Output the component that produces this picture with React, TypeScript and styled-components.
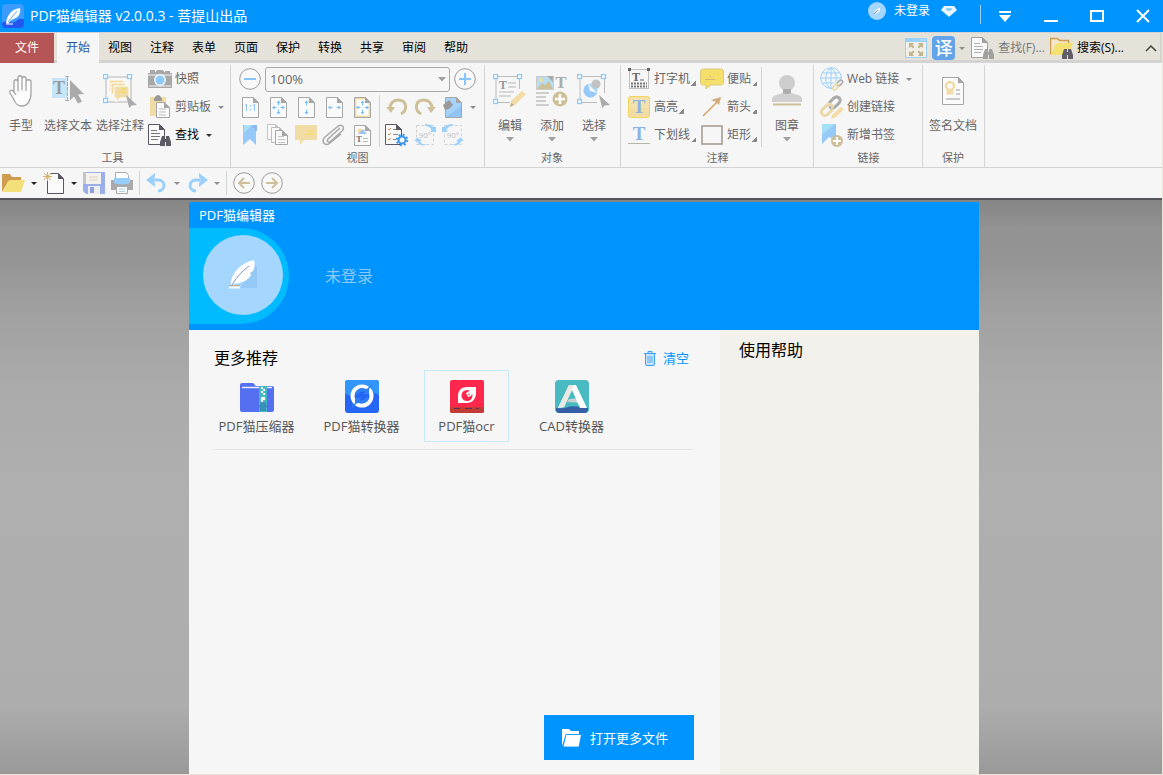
import React from 'react';
import styled, { createGlobalStyle, css } from 'styled-components';

const GlobalStyle = createGlobalStyle`
  * { box-sizing: border-box; }
  html, body { margin: 0; padding: 0; }
  body {
    font-family: 'Open Sans', 'Noto Sans CJK SC', sans-serif;
    font-size: 12px;
    line-height: 16px;
    color: #666;
    background: #f6f6f6;
  }
  button, select {
    font: inherit;
    color: inherit;
    background: none;
    border: 0;
    padding: 0;
    margin: 0;
    white-space: nowrap;
  }
  svg { display: block; flex: none; }
`;

const blue = '#0094ff';
const sky = '#9bd0fa';
const tan = '#cdbf98';
const sand = '#f1dca6';
const steel = '#aaa';

/* ---------- page frame ---------- */

const Page = styled.div`
  display: flex;
  flex-direction: column;
  min-height: 100vh;
`;

const TitleBar = styled.header`
  display: flex;
  height: 32px;
  padding-left: 2px;
  background: ${blue};
  color: #fff;
`;

const AppTitle = styled.h1`
  display: flex;
  align-items: center;
  gap: 6px;
  margin: 0 auto 0 0;
  font-size: 14px;
  line-height: 20px;
  font-weight: 400;
`;

const Account = styled.div`
  display: flex;
  align-items: center;
  gap: 11px;
  height: 22px;
  margin-right: 23px;
`;

const AccountButton = styled.button`
  display: flex;
  align-items: center;
  gap: 8px;
`;

const TitleRule = styled.span`
  width: 1px;
  height: 19px;
  margin: 5px 4px 0 0;
  background: #9bd3ff;
`;

const WindowButtons = styled.div`
  display: flex;
  gap: 6px;
`;

const WindowButton = styled.button`
  display: grid;
  place-items: center;
  width: 40px;
`;

const Frame = styled.div`
  display: flex;
  flex-direction: column;
  flex: 1;
  border-right: 1px solid #ebe6dc;
  border-bottom: 1px solid #e6e3d8;
`;

/* ---------- tabs ---------- */

const TabBar = styled.nav`
  display: flex;
  height: 31px;
  border: solid #d3d3d3;
  border-width: 1px 2px 3px 0;
  background: #e5e2da;
`;

const FileButton = styled.button`
  width: 54px;
  height: 30px;
  margin-right: 3px;
  background: #b55555;
  color: #fff;
`;

const Tab = styled.button<{ $active?: boolean }>`
  width: 42px;
  height: 30px;
  color: #000;
  ${(p) => p.$active && css`
    background: #f6f6f6;
    color: #2b579a;
  `}
`;

const TabTools = styled.div`
  display: flex;
  align-items: center;
  gap: 5px;
  height: 30px;
  margin-left: auto;
  padding-right: 3px;
`;

const TabTool = styled.button<{ $strong?: boolean }>`
  display: flex;
  align-items: center;
  gap: 3px;
  color: ${(p) => (p.$strong ? '#000' : '#777')};
`;

const Collapse = styled.button`
  margin-left: 16px;
`;

/* ---------- ribbon ---------- */

const Ribbon = styled.div`
  display: flex;
  height: 105px;
  padding-top: 2px;
  border-bottom: 1px solid #d3d3d3;
  background: #f6f6f6;
`;

const Group = styled.section<{ $pad?: number }>`
  display: flex;
  flex-direction: column;
  padding: 0 5px 0 ${(p) => p.$pad ?? 4}px;
  border-right: 1px solid #d3d3d3;
`;

const GroupBody = styled.div<{ $w?: number }>`
  display: flex;
  width: ${(p) => (p.$w ? `${p.$w}px` : 'auto')};
  height: 84px;
`;

const GroupLabel = styled.h2`
  margin: 0;
  text-align: center;
  font-size: 11px;
  line-height: 17px;
  font-weight: 400;
`;

const BigButton = styled.button<{ $w: number }>`
  display: flex;
  flex-direction: column;
  align-items: center;
  width: ${(p) => p.$w}px;
  padding-top: 7px;
`;

const BigIcon = styled.span`
  display: grid;
  place-items: center;
  height: 38px;
  margin-bottom: 8px;
`;

const BigArrow = styled.span`
  margin-top: 3px;
`;

const Stack = styled.div<{ $ml?: number }>`
  display: flex;
  flex-direction: column;
  margin-left: ${(p) => p.$ml ?? 0}px;
`;

const RowButton = styled.button<{ $strong?: boolean }>`
  display: flex;
  align-items: center;
  gap: 3px;
  height: 28px;
  color: ${(p) => (p.$strong ? '#000' : '#666')};
`;

const IconSlot = styled.span`
  display: grid;
  place-items: center;
  width: 24px;
`;

const RowArrow = styled.span`
  margin-left: 3px;
`;

const CornerMark = styled.span`
  align-self: flex-end;
  width: 5px;
  height: 5px;
  margin: 0 0 7px -2px;
  background: linear-gradient(135deg, transparent 50%, #888 50%);
`;

const ViewBody = styled.div`
  width: 243px;
  height: 84px;
`;

const ZoomRow = styled.div`
  display: flex;
  align-items: center;
  height: 28px;
`;

const IconButton = styled.button`
  display: grid;
  place-items: center;
  width: 28px;
  height: 28px;
`;

const SelectWrap = styled.span`
  position: relative;
  width: 185px;
  margin: 0 1px;
`;

const ZoomSelect = styled.select`
  display: block;
  appearance: none;
  width: 100%;
  height: 25px;
  padding: 0 4px;
  border: 1px solid #a9a9a9;
  border-radius: 3px;
  font-size: 13px;
`;

const SelectArrow = styled.span`
  position: absolute;
  top: 10px;
  right: 4px;
  pointer-events: none;
`;

const IconRows = styled.div`
  display: flex;
  height: 56px;
`;

const IconGrid = styled.div<{ $cols: string }>`
  display: grid;
  grid-template-columns: ${(p) => p.$cols};
  grid-auto-rows: 28px;
`;

const Divider = styled.span<{ $h: number; $mx?: number }>`
  align-self: center;
  width: 1px;
  height: ${(p) => p.$h}px;
  margin: 0 ${(p) => p.$mx ?? 3}px;
  background: #d3d3d3;
`;

/* ---------- quick access ---------- */

const QuickBar = styled.div`
  display: flex;
  align-items: center;
  height: 30px;
  background: #f6f6f6;
`;

const ArrowButton = styled.button`
  display: grid;
  place-items: center;
  width: 12px;
  height: 28px;
`;

/* ---------- workspace ---------- */

const Workspace = styled.main`
  display: flex;
  justify-content: center;
  flex: 1;
  padding: 2px 0 0 6px;
  border-top: 2px solid #57545b;
  background: linear-gradient(#858585, #939393 5%, #949494 10%, #a1a1a1 20%, #ababab 33%, #afafaf 50%, #adadad 88%, #999 100%);
`;

const Panel = styled.div`
  display: flex;
  flex-direction: column;
  width: 790px;
  background: #f6f6f6;
`;

const PanelHead = styled.div`
  height: 128px;
  background: ${blue};
  color: #fff;
`;

const PanelTitle = styled.div`
  padding-left: 10px;
  font-size: 13px;
  line-height: 26px;
`;

const Profile = styled.div`
  display: flex;
  align-items: center;
  gap: 36px;
  color: #8fc8f7;
  font-size: 16px;
`;

const AvatarBand = styled.div`
  width: 100px;
  height: 96px;
  padding: 7px 0 0 14px;
  border-radius: 0 48px 48px 0;
  background: #00bcff;
`;

const Avatar = styled.div`
  display: grid;
  place-items: center;
  width: 80px;
  height: 80px;
  border-radius: 50%;
  background: #a5d6fd;
`;

const PanelBody = styled.div`
  display: flex;
  flex: 1;
`;

const Recommend = styled.section`
  display: flex;
  flex-direction: column;
  width: 531px;
  padding: 16px 26px 14px 25px;
`;

const Help = styled.aside`
  flex: 1;
  padding: 8px 19px;
  background: #f2f1ec;
`;

const SectionTitle = styled.h2`
  margin: 0;
  font-size: 16px;
  line-height: 24px;
  font-weight: 400;
  color: #000;
`;

const SectionHead = styled.div`
  display: flex;
  justify-content: space-between;
  padding-right: 5px;
`;

const ClearButton = styled.button`
  display: flex;
  align-items: center;
  gap: 7px;
  font-size: 13px;
  color: ${blue};
`;

const AppList = styled.div`
  display: flex;
  gap: 20px;
  padding-bottom: 7px;
  border-bottom: 1px solid #e6e3d8;
`;

const AppTile = styled.a<{ $active?: boolean }>`
  display: flex;
  flex-direction: column;
  align-items: center;
  gap: 3px;
  width: 85px;
  height: 72px;
  padding-top: 9px;
  border: 1px solid ${(p) => (p.$active ? '#c9e8f7' : 'transparent')};
  color: #555;
  font-size: 13px;
  line-height: 18px;
  white-space: nowrap;
  text-decoration: none;
`;

const OpenButton = styled.button`
  display: flex;
  align-items: center;
  gap: 8px;
  width: 150px;
  height: 45px;
  margin: auto 0 0 auto;
  padding-left: 18px;
  background: ${blue};
  color: #fff;
  font-size: 13px;
`;

/* ---------- drawings ---------- */

type SvgProps = { w: number; h: number; children: React.ReactNode };
const Svg = ({ w, h, children }: SvgProps) => (
  <svg width={w} height={h} viewBox={`0 0 ${w} ${h}`} fill="none" aria-hidden="true">{children}</svg>
);

const Caret = ({ color = '#8c8c8c', wide }: { color?: string; wide?: boolean }) => (
  <Svg w={8} h={5}><path d={wide ? 'M0 0h8L4 4.500z' : 'M1 1h6L4 4z'} fill={wide ? '#a0a0a0' : color} /></Svg>
);

const Handle = ({ x, y }: { x: number; y: number }) => (
  <rect x={x - 0.5} y={y - 0.5} width="4" height="4" fill="#fff" stroke="#8cc9f8" strokeWidth="1.300" />
);

const Feather = () => (
  <Svg w={30} h={30}>
    <path d="M12 28L27 4l2 3v21z" fill="#8fc4f3" opacity=".75" />
    <path d="M3 24C3 14 12 3 26 0c1 4 1 8-1 11l-3 2 1 2c-3 5-7 7-12 8l-5 1-2 3z" fill="#fff" />
    <path d="M3 27C7 19 13 12 21 6" stroke="#7f93cf" />
    <path d="M1 26.500h11v2H1z" fill="#fff" />
    <path d="M1 25.500h11" stroke="#c7a98d" />
  </Svg>
);

const LogoIcon = () => (
  <Svg w={22} h={24}>
    <rect width="22" height="24" rx="4" fill="#3c9bff" />
    <path d="M0 19c6-4 9 2 14-2s6-1 8-2v5q0 4-4 4H4q-4 0-4-4z" fill="#2456f0" />
    <path d="M4 19C5 12 9 5 18 4c1 5-1 10-9 12l-3 4z" fill="#fff" />
    <path d="M6 18L15 7" stroke="#74a8e8" />
    <path d="M4 20h7" stroke="#fff" />
  </Svg>
);

const BadgeIcon = () => (
  <Svg w={18} h={18}>
    <circle cx="9" cy="9" r="9" fill="#a5d6fd" />
    <path d="M6 12c0-3 2-5 6-6 0 3-1 5-4 5l-1 2z" fill="#fff" />
    <path d="M6 12l4-4" stroke="#5f86b8" />
  </Svg>
);

const DiamondIcon = () => (
  <Svg w={16} h={11}>
    <path d="M3 0h10l3 4-8 7-8-7z" fill="#e8f6ff" />
    <path d="M5 3h6M6 4h4" stroke="#5ab4f5" />
  </Svg>
);

const HandIcon = () => (
  <Svg w={26} h={34}>
    <path d="M6 19V8c0-3 4-3 4 0v9M10 16V4c0-3 4-3 4 0v12M14 16V5c0-3 4-3 4 0v12M18 17V8c0-3 5-3 5 0v11c0 8-4 13-9 13-5 0-7-3-9-8l-3-5c-1-3 2-4 4-1l2 3" stroke="#a4a4a4" strokeWidth="1.3" fill="#fdfdfd" />
  </Svg>
);

const Pointer = ({ x, y, s = 1 }: { x: number; y: number; s?: number }) => (
  <path transform={`translate(${x} ${y}) scale(${s})`} d="M0 0l10 9-5 .5L3 12z" fill={steel} />
);

const LetterT = ({ x, y, s = 12, c = '#999' }: { x: number; y: number; s?: number; c?: string }) => (
  <text x={x} y={y} fontFamily="Liberation Serif, serif" fontWeight="700" fontSize={s} fill={c} textAnchor="middle">T</text>
);

const TextSelectIcon = () => (
  <Svg w={34} h={32}>
    <rect x="1" y="3" width="15" height="20" fill="#c5e6f8" />
    <LetterT x={8} y={19} s={18} />
    <path d="M14 1.500h5M14 25.500h5M16.500 2v23" stroke={steel} strokeDasharray="4 1" />
    <path d="M19 5l14 14-6 .5 4 7-4 2-4-7-4 4z" fill={steel} />
  </Svg>
);

const NoteSelectIcon = () => (
  <Svg w={34} h={34}>
    <path d="M4 3h24M4 28h24M3 5v22M28 5v22" stroke="#cbcbcb" strokeWidth="1.500" />
    <path d="M6 6h15v11H8l-2 3z" fill={sand} stroke="#fff" />
    <path d="M8 9h15v11H10l-2 3z" fill={sand} stroke="#fff" />
    <path d="M11 12h15v12h-9l-4 4v-4h-2z" fill={sand} stroke="#fff" />
    <path d="M19 15h4M16 18h7" stroke="#f3d873" strokeWidth="2" />
    <Handle x={1} y={1} /><Handle x={25} y={1} /><Handle x={1} y={25} />
    <Pointer x={23} y={21} s={1.1} />
  </Svg>
);

const CameraIcon = () => (
  <Svg w={24} h={18}>
    <path d="M2 0h5v2h1l1-2h6l1 2h1V1h5v2h2v15H0V3h2z" fill="#a8a8a8" />
    <path d="M0 5h24M1 16h22" stroke="#cfcfcf" strokeWidth="2" />
    <circle cx="12" cy="10" r="6" fill="#f6f6f6" /><circle cx="12" cy="10" r="4.500" fill="#8fcbfa" />
  </Svg>
);

type SheetProps = { x?: number; y?: number; w?: number; h?: number; c?: string; fill?: string };
const Sheet = ({ x = 0, y = 0, w = 17, h = 20, c = '#a6a6a6', fill = '#fafafa' }: SheetProps) => (
  <g transform={`translate(${x} ${y})`}>
    <path d={`M.5 .5H${w - 5.5}L${w - 0.5} 5.500V${h - 0.5}H.5z`} stroke={c} fill={fill} />
    <path d={`M${w - 6} 0V6H${w}z`} fill={c} />
  </g>
);

const PasteIcon = () => (
  <Svg w={22} h={24}>
    <path d="M1 2h16v19H1z" fill={sand} /><path d="M5 4l1-2q3-4 6 0l1 2v2H5z" fill="#999" />
    <Sheet x={7} y={7} w={14} h={16} /><path d="M10 14h7M10 17h7M10 20h7" stroke="#bbb" />
  </Svg>
);

const Binoculars = ({ x, y, c }: { x: number; y: number; c: string }) => (
  <g transform={`translate(${x} ${y})`} fill={c}>
    <path d="M2 0h3v10H0V6zM9 0H6v10h5V6z" /><path d="M4 3h3v3H4z" />
  </g>
);

const FindIcon = ({ faded }: { faded?: boolean }) => (
  <Svg w={24} h={22}>
    <Sheet w={17} h={21} c={faded ? '#a0a0a0' : '#5c5664'} />
    <path d="M3 6.500h6M3 9.500h9M3 12.500h9M3 15.500h7" stroke={faded ? '#b0b0b0' : '#777'} />
    <Binoculars x={12} y={12} c={faded ? '#a0a0a0' : '#5d5b64'} />
  </Svg>
);

const RoundIcon = ({ children }: { children: React.ReactNode }) => (
  <Svg w={22} h={22}><circle cx="11" cy="11" r="10.300" stroke="#9c9c9c" fill="#f9f9f9" />{children}</Svg>
);

const ArrowsIcon = ({ mode }: { mode: 'one' | 'all' | 'v' | 'h' | 'frame' }) => (
  <Svg w={17} h={21}>
    <Sheet w={17} h={21} fill={mode === 'frame' ? sand : '#fafafa'} />
    {mode === 'frame' && <path d="M2.500 2.500H11V6h3.500v12.500h-12z" fill="#fff" />}
    {mode === 'one' && <path d="M4.500 7v7M8.500 8v1.500M8.500 12v1.500M12.500 7v7M3 8.500l1.500-1M11 8.500l1.500-1" stroke="#8cc6f8" />}
    {(mode === 'v' || mode === 'all' || mode === 'frame') && <path d="M8.500 3.500l2 2.500H9v2.500H8V6H6.500zM8.500 17.500l-2-2.500H8v-2.500h1V15h1.500z" fill="#76bdf7" />}
    {(mode === 'h' || mode === 'all' || mode === 'frame') && <path d="M2 10.500L4.500 8.500V10h2v1h-2v1.500zM15 10.500l-2.500-2V10h-2v1h2v1.500z" fill="#76bdf7" />}
  </Svg>
);

const BookmarkIcon = () => (
  <Svg w={16} h={20}><path d="M1 0h13v20l-6-6-7 6z" fill="#95c9f7" /><path d="M2 0h8L2 8z" fill="#a8e0f5" /><path d="M10 0h5v6h-2V3h-3z" fill="#8fb5f0" /></Svg>
);

const PagesIcon = () => (
  <Svg w={22} h={22}><Sheet w={14} h={16} c="#c4c4c4" /><Sheet x={4} y={3} w={14} h={16} c="#bcbcbc" /><Sheet x={8} y={6} w={13} h={15} /><path d="M11 12.500h6M11 15.500h7M11 18.500h7" stroke="#c4c4c4" /></Svg>
);

const CommentIcon = () => (
  <Svg w={22} h={21}><path d="M0 0h22v15H9l-4 5v-5H0z" fill={sand} /><path d="M13 6h6M11 9h8" stroke="#f3da7c" strokeWidth="2" /></Svg>
);

const ClipIcon = () => (
  <Svg w={24} h={22}><path d="M18 4L6 15c-2 3 1 4 3 2L20 7c4-4-1-8-5-4L3 13c-5 5 1 10 5 6l11-9" stroke="#a8a8a8" strokeWidth="1.500" /></Svg>
);

const PageMediaIcon = () => (
  <Svg w={17} h={21}><Sheet w={17} h={21} /><circle cx="6" cy="6" r="2.500" fill={sand} /><path d="M9 4l4 5H4l2-2z" fill="#9cc4f0" /><LetterT x={5} y={17} s={9} c="#777" /><path d="M9 13.500h5M9 16.500h5" stroke="#bbb" /></Svg>
);

const TurnIcon = ({ flip }: { flip?: boolean }) => (
  <Svg w={22} h={20}>
    <g transform={flip ? 'translate(22 0) scale(-1 1)' : undefined}>
      <path d="M15 17c7-4 6-14-3-14-5 0-8 4-8 8" stroke={tan} strokeWidth="3" />
      <path d="M0 10h9l-4 6z" fill={tan} />
    </g>
  </Svg>
);

const FillPageIcon = () => (
  <Svg w={20} h={21}><Sheet x={2} w={17} h={21} fill="#a6d3fa" /><path d="M3 20L18 9v11z" fill="#8fc4f5" /><path d="M0 8l6-5 4 5-4 4-4 1z" fill="#999" /></Svg>
);

const TaskGearIcon = () => (
  <Svg w={24} h={23}>
    <Sheet w={17} h={21} c="#5c5664" />
    <path d="M3 5l1 1 2-2M3 10l1 1 2-2M3 15l1 1 2-2" stroke="#d08b5a" /><path d="M8 5.500h3M8 10.500h5M8 15.500h3" stroke="#888" />
    <circle cx="17" cy="16" r="3.500" stroke="#3c97ec" strokeWidth="2" fill="#f6f6f6" />
    <circle cx="17" cy="16" r="5.200" stroke="#3c97ec" strokeWidth="2" strokeDasharray="2 2.080" />
  </Svg>
);

const Rotate90Icon = ({ left }: { left?: boolean }) => (
  <Svg w={24} h={22}>
    <path d="M3.500 1.500h17v19h-17z" stroke="#d0d0d0" strokeDasharray="3 2" fill="#f6f6f6" />
    <text x="12" y="14" fontSize="8" fontFamily="Open Sans, sans-serif" fill="#bdbdbd" textAnchor="middle">90°</text>
    {left
      ? <path d="M12 0C8 0 5 1 4 3H1v5h6L5.500 6.500C6 4 8 2 12 1.500zM10 20c4 3 9 1 10-3h3l-3.500-3.500L15 17h2c-1 3-4 4-7 3z" fill={sky} />
      : <path d="M12 0c4 0 7 1 8 3h3v5h-6l1.500-1.500C18 4 16 2 12 1.500zM14 20c-4 3-9 1-10-3H1l3.500-3.500L9 17H7c1 3 4 4 7 3z" fill={sky} />}
  </Svg>
);

const EditIcon = () => (
  <Svg w={34} h={34}>
    <path d="M5 2.500h21M5 28.500h12M3 5v22M26.500 5v10" stroke="#bcbcbc" />
    <Handle x={1} y={1} /><Handle x={25} y={1} /><Handle x={1} y={26} />
    <LetterT x={10} y={15} /><path d="M15 9h8M15 13h8M6 18h15M6 22h12" stroke="#ccc" strokeWidth="1.500" />
    <path d="M18 27L29 17l4 3-11 11-5 2z" fill={sand} /><path d="M17 33l1-4 3 2z" fill="#b9ad94" />
  </Svg>
);

const AddIcon = () => (
  <Svg w={34} h={34}>
    <rect x="1.500" y="2.500" width="17" height="13" fill="#b5dcf2" stroke="#ccc" /><path d="M2 15l5-6 3 2 4-4 4 8z" fill={tan} /><circle cx="6" cy="6" r="2" fill="#f3de94" />
    <path d="M12 2h6v6z" fill="#aaa" />
    <LetterT x={26} y={14} s={17} c="#aaa" /><path d="M1 19h13M1 23h10M1 27h10M1 31h13" stroke="#c0c0c0" strokeWidth="1.500" />
    <circle cx="25" cy="25" r="7.500" fill={tan} /><path d="M25 20v10M20 25h10" stroke="#fff" strokeWidth="2.500" />
  </Svg>
);

const ObjectSelectIcon = () => (
  <Svg w={34} h={34}>
    <path d="M5 2.500h21M5 28.500h15M3 5v22M27.500 5v14" stroke="#bcbcbc" />
    <Handle x={1} y={1} /><Handle x={25} y={1} /><Handle x={1} y={26} />
    <path d="M11 10a7 7 0 1 0 9 9l-7-2z" fill="#95c9f7" /><path d="M11 10a7 7 0 0 1 9 9z" fill="#a9dbf7" /><circle cx="19" cy="10" r="4.500" fill="#c2c2c2" />
    <Pointer x={22} y={21} s={1.1} />
  </Svg>
);

const TypewriterIcon = () => (
  <Svg w={22} h={22}>
    <rect x="1.500" y="1.500" width="19" height="19" stroke="#888" strokeDasharray="1 1" />
    <path d="M0 0h3v3H0zM19 0h3v3h-3z" fill="#666" />
    <LetterT x={8} y={13} s={12} c="#666" /><path d="M12 12h4" stroke="#666" />
    <path d="M3 15.500h16M3 18.500h16" stroke="#777" strokeWidth="2" strokeDasharray="2 1" />
  </Svg>
);

const StickyIcon = () => (
  <Svg w={24} h={22}><path d="M2 1h20l1.500 2v12L22 17H11l-5 4v-4H2L.5 15V3z" fill="#f4df6b" stroke="#dccb7e" /><path d="M9 8.500h2M5 11.500h10" stroke="#d3b678" /></Svg>
);

const HighlightIcon = () => (
  <Svg w={22} h={22}><rect x=".5" y=".5" width="21" height="21" rx="2" fill="#f4e2ae" stroke="#f2d356" /><path d="M1 12h20v8H1z" fill="#f1dca6" /><LetterT x={11} y={17} s={19} c="#8cb0e8" /></Svg>
);

const UnderlineIcon = () => (
  <Svg w={22} h={24}><LetterT x={11} y={17} s={19} c="#8cb0e8" /><path d="M0 20.500h22" stroke="#b4b8a6" /></Svg>
);

const ArrowDrawIcon = () => (
  <Svg w={20} h={20}><path d="M1 19L18 2" stroke="#d9a05c" strokeWidth="1.500" /><path d="M19 0l-2 8-3-3-5-2z" fill="#d0ac7e" /></Svg>
);

const RectIcon = () => (
  <Svg w={22} h={20}><rect x="1" y="1" width="20" height="18" stroke="#a3968f" strokeWidth="1.500" /></Svg>
);

const StampIcon = () => (
  <Svg w={30} h={34}><circle cx="15" cy="9" r="8" fill="#cdcdcd" /><path d="M11 15h8v5h-8z" fill="#adadad" /><path d="M0 28v-3c0-4 6-4 10-6q5 2 10 0c4 2 10 2 10 6v3z" fill="#d0d0d0" /><path d="M1 30.500h28" stroke={tan} strokeWidth="2" /></Svg>
);

const ChainShape = ({ x, y, s = 1 }: { x: number; y: number; s?: number }) => (
  <g transform={`translate(${x} ${y}) scale(${s})`} strokeWidth="3">
    <path d="M9 8l5-5c4-3 8 1 5 5l-4 4c-2 2-5 1-5-1" stroke="#aaa" /><path d="M13 14l-6 6c-4 2-7-2-5-5l5-5c3-2 6 0 5 3" stroke="#ead9a8" />
  </g>
);

const WebIcon = () => (
  <Svg w={24} h={24}>
    <circle cx="11" cy="11" r="10.300" stroke={sky} /><path d="M11 1v21M1 11h20M3 6h16M3 16h16M11 1c-7 5-7 16 0 21M11 1c7 5 7 16 0 21" stroke={sky} />
    <path d="M12 24V17l7-5h5v12z" fill="#f6f6f6" opacity=".7" />
    <ChainShape x={12} y={12} s={0.53} />
  </Svg>
);

const LinkIcon = () => (
  <Svg w={24} h={24}><ChainShape x={0} y={0} /><path d="M12 20l9-8 3 2-8 8-5 2z" fill={sand} /></Svg>
);

const BookmarkAddIcon = () => (
  <Svg w={22} h={23}><path d="M1 0h14v17l-7-4-7 7z" fill="#95c9f7" /><path d="M1 0h13L1 11z" fill="#a5dff6" /><circle cx="16" cy="17" r="6" fill={tan} /><path d="M16 13v8M12 17h8" stroke="#fff" strokeWidth="2" /></Svg>
);

const SignIcon = () => (
  <Svg w={24} h={30}><Sheet x={1} y={1} w={22} h={28} /><circle cx="9" cy="10" r="4" stroke={sand} strokeWidth="2.500" /><path d="M6 14l-1 5 2-1 2 1v-4M12 14l1 5-2-1-2 1v-4" fill={sand} /><path d="M15 14h4M15 18h4M5 23h14" stroke="#bbb" strokeWidth="1.500" /></Svg>
);

const OpenFolderIcon = () => (
  <Svg w={24} h={20}><path d="M0 19V1h8l2 3h9v5H6z" fill="#cf9c50" /><path d="M6 8l3-1h14l-4 12H1z" fill="#f3e07a" /></Svg>
);

const NewIcon = () => (
  <Svg w={22} h={22}><Sheet x={4} y={1} w={17} h={21} c="#5c5664" /><path d="M0 0h8v9H0z" fill="#f6f6f6" /><path d="M4.500 0v9M0 4.500h9M1 1l7 7M8 1L1 8" stroke="#dcb068" /></Svg>
);

const SaveIcon = () => (
  <Svg w={22} h={22}><path d="M0 0h22v22H3l-3-3z" fill="#9aaeea" /><path d="M0 0h3v12H0z" fill="#c5c5c5" /><path d="M3 1h15v11H3z" fill="#f4f2ee" /><path d="M6 5h9M6 8h9" stroke="#e3d5b5" /><path d="M5 14h12v8H5z" fill="#eee" /><path d="M7 15h4v6H7z" fill="#8ca0e0" /></Svg>
);

const PrintIcon = () => (
  <Svg w={22} h={22}><path d="M4.500 .5h11l2 3V8h-13z" fill="#fff" stroke="#aaa" /><path d="M0 8h22v10H0z" fill="#aaa" /><path d="M3 6h16v5q-8 3-16 0z" fill="#96cdfa" /><path d="M5.500 14.500h11v7h-11z" fill="#fafafa" stroke="#aaa" /><path d="M8 17h6M8 19.500h6" stroke="#a9d4f0" /></Svg>
);

const UndoIcon = ({ flip }: { flip?: boolean }) => (
  <Svg w={22} h={20}><g transform={flip ? 'translate(22 0) scale(-1 1)' : undefined}>
    <path d="M4 7h8c8 0 8 11 0 11" stroke={sky} strokeWidth="3" /><path d="M0 7l9-7v4L6 7l3 3v4z" fill={sky} />
  </g></Svg>
);

const ScreenIcon = () => (
  <Svg w={22} h={20}><path d="M.5 .5h21v19H.5z" fill="#f2efe8" stroke={sky} /><path d="M0 0h22v4H0z" fill={sky} /><path d="M16 2h1M19 2h1" stroke="#fff" />
    <path d="M4 5h5L7.500 7l2 2-1.500 1.500-2-2L4 10zM18 5h-5l1.500 2-2 2 1.500 1.500 2-2L18 10zM4 18h5l-1.500-2 2-2L8 12.500l-2 2L4 13zM18 18h-5l1.500-2-2-2 1.500-1.500 2 2L18 13z" fill="#c2b48b" /></Svg>
);

const Translate = styled.span`
  display: grid;
  place-items: center;
  width: 23px;
  height: 24px;
  border-radius: 4px;
  background: #62a3ea;
  color: #fff;
  font-size: 18px;
  line-height: 22px;
  font-weight: 500;
`;

const FolderFindIcon = () => (
  <Svg w={24} h={22}><path d="M.5 17.500V1.500h7l2 2h9v4" fill="#f2e7c9" stroke="#d09c50" strokeWidth="1.500" /><path d="M5 8l3-2h15l-4 12H1z" fill="#f4e172" /><Binoculars x={12} y={12} c="#605d66" /></Svg>
);

const TrashIcon = () => (
  <Svg w={12} h={16}><path d="M0 3.500h12M4 3V1.500h4V3M1.500 4v10q0 1.500 1.500 1.500h6q1.500 0 1.500-1.500V4" stroke="#3f9ff2" fill="#c4e3fd" /><path d="M4 6v7M6 6v7M8 6v7" stroke="#5fadf2" /></Svg>
);

const WhiteFolderIcon = () => (
  <Svg w={20} h={18}><path d="M0 17V0h7l2 2h8v3H4z" fill="#fff" /><path d="M4 5.500h15.500L17 18H1z" fill="#fff" stroke={blue} strokeWidth=".8" /></Svg>
);

const ZipAppIcon = () => (
  <Svg w={34} h={34}><path d="M0 5q0-2 2-2h11l3 3h16q2 0 2 2v22q0 2-2 2H2q-2 0-2-2z" fill="#5470f0" /><path d="M2 7.500h30" stroke="#eef" strokeWidth="1.500" />
    <path d="M19 6h8v26h-8z" fill="#43b9c0" /><path d="M21 7h2v2h-2zM23 9h2v2h-2zM21 11h2v2h-2zM23 13h2v2h-2zM21 17h4v3h-2v2h-2z" fill="#fff" /><path d="M17 25h3v-3h6v3h3l-3 3v3h-6v-3z" fill="#357fb5" opacity=".7" /></Svg>
);

const ConvertAppIcon = () => (
  <Svg w={34} h={34}><rect width="34" height="33" rx="3" fill="#2666f5" /><path d="M3 0h28q3 0 3 3v12l-9-4-10 7L0 14V3q0-3 3-3z" fill="#3196f7" />
    <circle cx="17" cy="16" r="9.500" stroke="#fff" strokeWidth="4" fill="#2666f5" />
    <path d="M10 13q4-7 11-4l3-1v6h-6l2-2q-5-2-8 3zM24 18q-4 7-11 5l-3 1v-6h6l-2 2q5 2 8-3z" fill="#2f80f6" />
    <path d="M23 9l4-4M7 27l4-4" stroke="#2d83f0" strokeWidth="1.500" /></Svg>
);

const OcrAppIcon = () => (
  <Svg w={34} h={34}><rect width="34" height="33" rx="2" fill="#ff284c" /><path d="M0 27h34v4q0 2-2 2H2q-2 0-2-2z" fill="#c33b35" /><path d="M4 28.500h6M15 28.500h7M26 28.500h3" stroke="#5b3050" />
    <path d="M8 23v-7c0-6 4-9 9-9h9v6c0 6-4 10-9 10z" fill="#fff" />
    <circle cx="17" cy="15.500" r="5.500" fill="#ff284c" />
    <path d="M16 13l5-3 2 2-2 4-3 1z" fill="#fff" /><path d="M18 14l2 1" stroke="#ff284c" /></Svg>
);

const CadAppIcon = () => (
  <Svg w={34} h={34}><rect width="34" height="33" rx="4" fill="#48bac2" /><path d="M1 28q8 1 12-1t20 1v1q0 4-4 4H5q-4 0-4-4z" fill="#355ea5" />
    <path d="M14 19l11-1 2 5-15-1z" fill="#c5d2d0" />
    <path d="M14 5h7l11 23h-7L17 10 9 27l-6 1z" fill="#fff" />
    <path d="M14 5h5L9 27l-6 1z" fill="#ece9e2" /></Svg>
);

/* ---------- sections ---------- */

const tabs = ['视图', '注释', '表单', '页面', '保护', '转换', '共享', '审阅', '帮助'];

const apps = [
  { name: 'PDF猫压缩器', icon: <ZipAppIcon /> },
  { name: 'PDF猫转换器', icon: <ConvertAppIcon /> },
  { name: 'PDF猫ocr', icon: <OcrAppIcon />, active: true },
  { name: 'CAD转换器', icon: <CadAppIcon /> },
];

type BigProps = { icon: React.ReactNode; label: string; w?: number; menu?: boolean };
const Big = ({ icon, label, w = 42, menu }: BigProps) => (
  <BigButton $w={w}>
    <BigIcon>{icon}</BigIcon>
    {label}
    {menu && <BigArrow><Caret wide /></BigArrow>}
  </BigButton>
);

type RowProps = { icon: React.ReactNode; label: string; menu?: boolean; corner?: boolean; strong?: boolean };
const Row = ({ icon, label, menu, corner, strong }: RowProps) => (
  <RowButton $strong={strong}>
    <IconSlot>{icon}</IconSlot>
    {label}
    {menu && <RowArrow><Caret color={strong ? '#333' : undefined} /></RowArrow>}
    {corner && <CornerMark />}
  </RowButton>
);

const Tool = ({ label, children }: { label: string; children: React.ReactNode }) => (
  <IconButton aria-label={label}>{children}</IconButton>
);

const ViewTools = () => (
  <ViewBody>
    <ZoomRow>
      <Tool label="缩小"><RoundIcon><path d="M5 11h12" stroke="#87c4fa" strokeWidth="2" /></RoundIcon></Tool>
      <SelectWrap>
        <ZoomSelect aria-label="缩放" defaultValue="100%"><option>100%</option></ZoomSelect>
        <SelectArrow><Caret wide /></SelectArrow>
      </SelectWrap>
      <Tool label="放大"><RoundIcon><path d="M5 11h12M11 5v12" stroke="#87c4fa" strokeWidth="2" /></RoundIcon></Tool>
    </ZoomRow>
    <IconRows>
      <IconGrid $cols="repeat(5, 28px)">
        <Tool label="实际大小"><ArrowsIcon mode="one" /></Tool>
        <Tool label="适合页面"><ArrowsIcon mode="all" /></Tool>
        <Tool label="适合高度"><ArrowsIcon mode="v" /></Tool>
        <Tool label="适合宽度"><ArrowsIcon mode="h" /></Tool>
        <Tool label="适合可见"><ArrowsIcon mode="frame" /></Tool>
        <Tool label="书签"><BookmarkIcon /></Tool>
        <Tool label="缩略图"><PagesIcon /></Tool>
        <Tool label="注释"><CommentIcon /></Tool>
        <Tool label="附件"><ClipIcon /></Tool>
        <Tool label="内容"><PageMediaIcon /></Tool>
      </IconGrid>
      <Divider $h={52} />
      <IconGrid $cols="28px 28px 28px 12px">
        <Tool label="向左旋转"><TurnIcon /></Tool>
        <Tool label="向右旋转"><TurnIcon flip /></Tool>
        <Tool label="背景"><FillPageIcon /></Tool>
        <ArrowButton aria-label="背景选项"><Caret /></ArrowButton>
        <Tool label="选项"><TaskGearIcon /></Tool>
        <Tool label="顺时针"><Rotate90Icon /></Tool>
        <Tool label="逆时针"><Rotate90Icon left /></Tool>
      </IconGrid>
    </IconRows>
  </ViewBody>
);

export default function App() {
  return (
    <Page>
      <GlobalStyle />
      <TitleBar>
        <AppTitle><LogoIcon />PDF猫编辑器 v2.0.0.3 - 菩提山出品</AppTitle>
        <Account>
          <AccountButton><BadgeIcon />未登录</AccountButton>
          <AccountButton aria-label="会员"><DiamondIcon /></AccountButton>
        </Account>
        <TitleRule />
        <WindowButtons>
          <WindowButton aria-label="菜单"><Svg w={12} h={11}><path d="M0 1h12" stroke="#fff" strokeWidth="2" /><path d="M0 4h12l-6 7z" fill="#fff" /></Svg></WindowButton>
          <WindowButton aria-label="最小化"><Svg w={14} h={11}><path d="M0 10h14" stroke="#fff" strokeWidth="2" /></Svg></WindowButton>
          <WindowButton aria-label="最大化"><Svg w={14} h={12}><path d="M1 1h12v10H1z" stroke="#fff" strokeWidth="2" /></Svg></WindowButton>
          <WindowButton aria-label="关闭"><Svg w={14} h={14}><path d="M1 1l12 12M13 1L1 13" stroke="#fff" strokeWidth="2" /></Svg></WindowButton>
        </WindowButtons>
      </TitleBar>

      <Frame>
        <TabBar>
          <FileButton>文件</FileButton>
          <Tab $active>开始</Tab>
          {tabs.map((t) => <Tab key={t}>{t}</Tab>)}
          <TabTools>
            <TabTool aria-label="全屏"><ScreenIcon /></TabTool>
            <TabTool><Translate>译</Translate><Caret /></TabTool>
            <TabTool><FindIcon faded />查找(F)...</TabTool>
            <TabTool $strong><FolderFindIcon />搜索(S)...</TabTool>
            <Collapse aria-label="折叠"><Svg w={12} h={8}><path d="M1 7l5-5 5 5" stroke="#444" strokeWidth="1.500" /></Svg></Collapse>
          </TabTools>
        </TabBar>

        <Ribbon>
          <Group $pad={0}>
            <GroupBody>
              <Big icon={<HandIcon />} label="手型" />
              <Big icon={<TextSelectIcon />} label="选择文本" w={52} />
              <Big icon={<NoteSelectIcon />} label="选择注释" w={52} />
              <Stack $ml={2}>
                <Row icon={<CameraIcon />} label="快照" />
                <Row icon={<PasteIcon />} label="剪贴板" menu />
                <Row icon={<FindIcon />} label="查找" menu strong />
              </Stack>
            </GroupBody>
            <GroupLabel>工具</GroupLabel>
          </Group>

          <Group $pad={5}>
            <ViewTools />
            <GroupLabel>视图</GroupLabel>
          </Group>

          <Group>
            <GroupBody>
              <Big icon={<EditIcon />} label="编辑" menu />
              <Big icon={<AddIcon />} label="添加" menu />
              <Big icon={<ObjectSelectIcon />} label="选择" menu />
            </GroupBody>
            <GroupLabel>对象</GroupLabel>
          </Group>

          <Group $pad={6}>
            <GroupBody>
              <Stack>
                <Row icon={<TypewriterIcon />} label="打字机" corner />
                <Row icon={<HighlightIcon />} label="高亮" corner />
                <Row icon={<UnderlineIcon />} label="下划线" corner />
              </Stack>
              <Stack $ml={4}>
                <Row icon={<StickyIcon />} label="便贴" corner />
                <Row icon={<ArrowDrawIcon />} label="箭头" corner />
                <Row icon={<RectIcon />} label="矩形" corner />
              </Stack>
              <Divider $h={80} $mx={4} />
              <Big icon={<StampIcon />} label="图章" menu />
            </GroupBody>
            <GroupLabel>注释</GroupLabel>
          </Group>

          <Group $pad={6}>
            <GroupBody $w={97}>
              <Stack>
                <Row icon={<WebIcon />} label="Web 链接" menu />
                <Row icon={<LinkIcon />} label="创建链接" />
                <Row icon={<BookmarkAddIcon />} label="新增书签" />
              </Stack>
            </GroupBody>
            <GroupLabel>链接</GroupLabel>
          </Group>

          <Group>
            <GroupBody>
              <Big icon={<SignIcon />} label="签名文档" w={52} />
            </GroupBody>
            <GroupLabel>保护</GroupLabel>
          </Group>
        </Ribbon>

        <QuickBar>
          <Tool label="打开"><OpenFolderIcon /></Tool>
          <ArrowButton aria-label="打开选项"><Caret color="#222" /></ArrowButton>
          <Tool label="新建"><NewIcon /></Tool>
          <ArrowButton aria-label="新建选项"><Caret color="#222" /></ArrowButton>
          <Tool label="保存"><SaveIcon /></Tool>
          <Tool label="打印"><PrintIcon /></Tool>
          <Divider $h={24} />
          <Tool label="撤销"><UndoIcon /></Tool>
          <ArrowButton aria-label="撤销选项"><Caret /></ArrowButton>
          <Tool label="重做"><UndoIcon flip /></Tool>
          <ArrowButton aria-label="重做选项"><Caret /></ArrowButton>
          <Divider $h={24} />
          <Tool label="后退"><RoundIcon><path d="M17 11H6M11 6l-5 5 5 5" stroke={tan} strokeWidth="2" /></RoundIcon></Tool>
          <Tool label="前进"><RoundIcon><path d="M5 11h11M11 6l5 5-5 5" stroke={tan} strokeWidth="2" /></RoundIcon></Tool>
        </QuickBar>

        <Workspace>
          <Panel>
            <PanelHead>
              <PanelTitle>PDF猫编辑器</PanelTitle>
              <Profile>
                <AvatarBand><Avatar><Feather /></Avatar></AvatarBand>
                未登录
              </Profile>
            </PanelHead>
            <PanelBody>
              <Recommend>
                <SectionHead>
                  <SectionTitle>更多推荐</SectionTitle>
                  <ClearButton><TrashIcon />清空</ClearButton>
                </SectionHead>
                <AppList>
                  {apps.map((a) => (
                    <AppTile key={a.name} href="#" $active={a.active}>{a.icon}{a.name}</AppTile>
                  ))}
                </AppList>
                <OpenButton><WhiteFolderIcon />打开更多文件</OpenButton>
              </Recommend>
              <Help><SectionTitle>使用帮助</SectionTitle></Help>
            </PanelBody>
          </Panel>
        </Workspace>
      </Frame>
    </Page>
  );
}
